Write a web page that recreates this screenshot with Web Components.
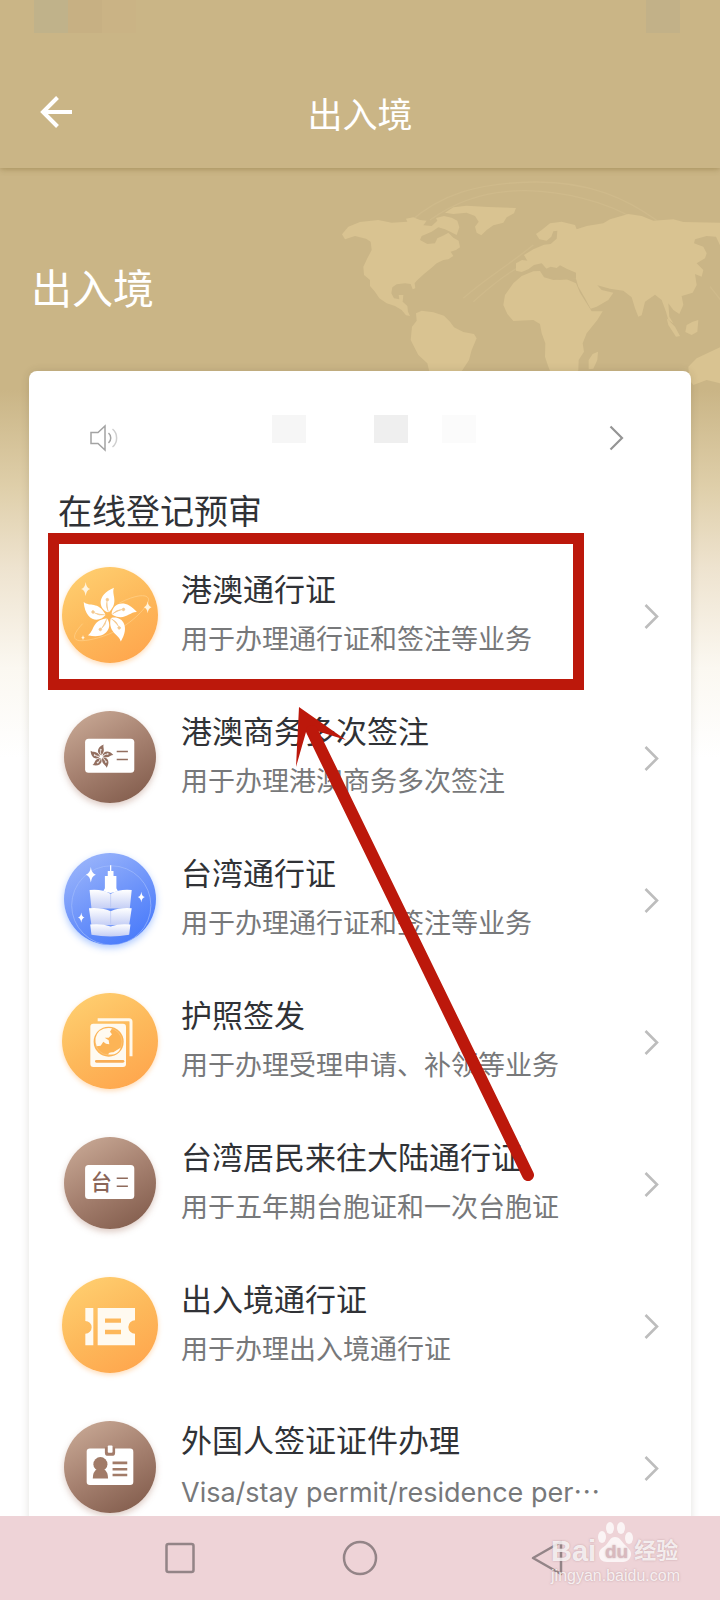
<!DOCTYPE html>
<html lang="zh-CN">
<head>
<meta charset="UTF-8">
<meta name="viewport" content="width=device-width, initial-scale=1">
<title>出入境</title>
<style>
  html, body {
    height: 100%;
    margin: 0;
  }
  body {
    font-family: Inter, "Noto Sans CJK SC", sans-serif;
    color: #303236;
    background: #fff;
  }
</style>
</head>
<body>
<app-shell>
  <app-header slot="header">出入境</app-header>
  <hero-banner>出入境</hero-banner>
  <service-card heading="在线登记预审">
    <service-item icon="flower" tone="gold" label="港澳通行证">用于办理通行证和签注等业务</service-item>
    <service-item icon="flower-card" tone="brown" label="港澳商务多次签注">用于办理港澳商务多次签注</service-item>
    <service-item icon="tower" tone="blue" label="台湾通行证">用于办理通行证和签注等业务</service-item>
    <service-item icon="passport" tone="gold" label="护照签发">用于办理受理申请、补领等业务</service-item>
    <service-item icon="tai-card" tone="brown" label="台湾居民来往大陆通行证">用于五年期台胞证和一次台胞证</service-item>
    <service-item icon="ticket" tone="gold" label="出入境通行证">用于办理出入境通行证</service-item>
    <service-item icon="badge" tone="brown" label="外国人签证证件办理">Visa/stay permit/residence per<span style="font-family: 'Noto Sans CJK SC', sans-serif">…</span></service-item>
  </service-card>
  <guide-marks></guide-marks>
  <system-nav slot="footer">
    <baidu-mark></baidu-mark>
  </system-nav>
</app-shell>

<script>
class AppShell extends HTMLElement {
  constructor() {
    super();
    this.attachShadow({ mode: 'open' });
    this.shadowRoot.innerHTML = `
      <style>
        :host {
          display: flex;
          flex-direction: column;
          height: 100vh;
        }
        main {
          position: relative;
          flex: 1;
          min-height: 0;
          overflow-y: auto;
          scrollbar-width: none;
          background: linear-gradient(#cab586 0, #cab586 222px, #dfcfaa 320px, #eee3cf 400px, #fbf8f1 500px, #fff 590px);
        }
      </style>
      <slot name="header"></slot>
      <main><slot></slot></main>
      <slot name="footer"></slot>
    `;
  }
}
customElements.define('app-shell', AppShell);

class AppHeader extends HTMLElement {
  constructor() {
    super();
    this.attachShadow({ mode: 'open' });
    this.shadowRoot.innerHTML = `
      <style>
        :host {
          display: block;
          position: relative;
          z-index: 1;
          background: #cab586;
          box-shadow: 0 1px 6px rgba(120, 95, 40, 0.45);
        }
        .status {
          display: flex;
          height: 56px;
          padding: 0 40px 0 34px;
        }
        .status i {
          width: 34px;
          height: 33px;
          background: #c0b28a;
        }
        .status i:nth-child(2) { background: #c7b083; }
        .status i:nth-child(3) { background: #cab385; }
        .status i:last-child { margin-left: auto; background: #c2b188; }
        .bar {
          display: grid;
          grid-template-columns: 72px 1fr 72px;
          align-items: center;
          height: 112px;
        }
        button {
          display: flex;
          justify-content: flex-end;
          padding: 0;
          border: 0;
          background: none;
        }
        h1 {
          margin: 0;
          padding-top: 6px;
          font-size: 35px;
          line-height: 52px;
          font-weight: 400;
          text-align: center;
          color: #fff;
        }
      </style>
      <div class="status"><i></i><i></i><i></i><i></i></div>
      <div class="bar">
        <button type="button" aria-label="返回">
          <svg width="32" height="32" viewBox="0 0 32 32" fill="none" stroke="#fff" stroke-width="4">
            <path d="M32 16H3M17.500 1.500L3 16l14.500 14.500"/>
          </svg>
        </button>
        <h1><slot></slot></h1>
      </div>
    `;
  }
}
customElements.define('app-header', AppHeader);

class HeroBanner extends HTMLElement {
  constructor() {
    super();
    this.attachShadow({ mode: 'open' });
    this.shadowRoot.innerHTML = `
      <style>
        :host {
          display: block;
          position: relative;
          padding: 91px 31px 52px;
        }
        h2 {
          position: relative;
          margin: 0;
          font-size: 41px;
          line-height: 60px;
          font-weight: 400;
          color: #fff;
        }
        .map {
          position: absolute;
          top: 0;
          right: 0;
        }
      </style>
      <svg class="map" width="400" height="242" viewBox="0 -6 1200 726" fill="#d9c391" aria-hidden="true">
        <g fill="none" stroke="#cfba8b" stroke-width="4">
          <path d="M270 155C360 75 470 38 640 36s280 50 370 115"/>
          <path d="M330 150C420 85 520 60 620 62s240 30 330 90"/>
          <path d="M430 385C490 330 560 290 640 225M460 395C510 350 560 310 600 290M1170 350l40 50"/>
        </g>
        <path d="M66 193L85 170 120 156 175 150 215 158 262 155 258 146 280 142 300 150 320 152 310 166 335 168 352 152 348 144 372 138 395 143 412 152 418 172 410 195 392 186 375 178 355 172 335 185 305 198 300 210 322 222 345 220 352 205 372 196 385 188 400 203 416 212 420 232 408 240 392 245 400 258 385 268 370 270 350 280 335 293 312 312 290 332 284 340 286 355 278 358 272 342 255 340 230 343 217 352 214 370 222 385 238 388 236 375 250 375 248 395 262 408 264 425 270 438 258 436 245 420 225 408 200 400 178 385 165 365 150 348 150 330 132 315 130 290 142 265 155 240 152 215 138 206 105 198 75 208Z"/>
        <path d="M375 128L400 112 440 107 505 111 588 114 582 130 560 142 550 158 520 166 500 180 484 196 470 188 465 170 476 155 465 138 440 128 400 132Z"/>
        <path d="M288 430L305 422 340 427 372 437 390 455 402 472 430 486 462 492 470 505 455 540 447 570 430 596 400 640 372 690 345 680 328 605 322 580 295 555 272 510 276 470 290 452Z"/>
        <path d="M605 318L640 304 660 303 672 322 700 330 740 328 768 340 780 368 805 408 815 424 848 424 832 450 800 490 788 520 792 545 776 570 775 600 755 640 715 650 695 615 685 590 675 560 676 520 665 490 660 462 640 450 580 453 562 432 550 405 555 375 580 340Z"/>
        <path d="M588 302L588 280 606 270 622 272 612 255 640 238 672 224 692 222 710 206 712 182 700 184 694 200 680 212 658 208 648 192 665 180 690 160 725 155 765 165 770 178 800 168 850 160 870 148 925 132 965 138 1000 152 1060 148 1090 156 1200 158 1200 226 1188 200 1160 198 1125 208 1122 220 1150 230 1160 250 1155 265 1130 280 1150 300 1145 320 1125 312 1130 345 1118 368 1085 378 1090 405 1078 432 1060 420 1045 400 1048 440 1060 460 1045 450 1038 425 1025 390 1005 374 975 395 965 436 955 440 945 415 935 382 910 362 870 356 832 346 845 360 880 368 865 390 830 410 812 416 795 385 775 350 768 326 740 322 715 325 690 318 678 295 665 280 642 285 625 298 605 306Z"/>
        <path d="M834 545L832 570 820 596 806 598 806 570 818 552ZM1040 445L1065 470 1080 498 1068 500 1045 465ZM1135 450L1132 485 1115 495 1096 486 1100 465 1118 455Z"/>
        <path d="M1105 590L1130 565 1165 548 1200 532 1200 640 1160 630 1120 645 1108 630Z"/>
        <path fill="#cab586" d="M670 300l22-10 18 4 10-8 20 10 28 12v18l-50 3-44-12Z"/>
      </svg>
      <h2><slot></slot></h2>
    `;
  }
}
customElements.define('hero-banner', HeroBanner);

class ServiceCard extends HTMLElement {
  constructor() {
    super();
    this.attachShadow({ mode: 'open' });
    const heading = this.getAttribute('heading') || '';
    this.shadowRoot.innerHTML = `
      <style>
        :host {
          display: block;
          position: relative;
          margin: 0 29px;
          padding: 38px 29px 0;
          border-radius: 8px;
          background: #fff;
          box-shadow: 0 0 8px rgba(60, 50, 30, 0.14);
        }
        .notice {
          display: flex;
          align-items: center;
          box-sizing: border-box;
          width: 100%;
          height: 58px;
          padding: 0 38px 0 32px;
          border: 0;
          background: none;
        }
        .ticker {
          display: flex;
          flex: 1;
          justify-content: center;
          gap: 34px;
          padding-bottom: 18px;
        }
        .ticker i {
          width: 34px;
          height: 28px;
          background: #f6f6f6;
        }
        .ticker i:nth-child(1) { margin-left: 20px; margin-right: 34px; }
        .ticker i:nth-child(2) { background: #efefef; }
        .ticker i:nth-child(3) { background: #fbfbfb; }
        h3 {
          margin: 22px 0 9px;
          font-size: 34px;
          line-height: 46px;
          font-weight: 400;
        }
      </style>
      <button class="notice" type="button" aria-label="通知">
        <svg width="28" height="28" viewBox="0 0 28 28" fill="none" stroke="#a3a3a3" stroke-width="1.500">
          <path d="M1 8.500h7l7-6.500v24l-7-6.500H1z"/>
          <path d="M18.500 9c3 2.500 3 7.500 0 10"/>
          <path stroke="#cfcfcf" d="M22.500 5c5.500 4.500 5.500 13.500 0 18"/>
        </svg>
        <span class="ticker"><i></i><i></i><i></i></span>
        <svg width="15" height="26" viewBox="0 0 15 26" fill="none" stroke="#959595" stroke-width="2.200">
          <path d="M1.500 1.500L13 13 1.500 24.500"/>
        </svg>
      </button>
      <h3>${heading}</h3>
      <slot></slot>
    `;
  }
}
customElements.define('service-card', ServiceCard);

// all icons are drawn on a 288 grid, one disc each
const PETALS = [0, 72, 144, 216, 288]
  .map(a => `<path transform="rotate(${a})" d="M-2 -10C-30 -20 -38 -62 16 -84C7 -64 32 -42 2 -12Z"/>`)
  .join('');
const STAMENS = [0, 72, 144, 216, 288]
  .map(a => `<g transform="rotate(${a})"><path d="M-1 -12Q-10 -28 -5 -44"/><circle cx="-4" cy="-48" r="4"/></g>`)
  .join('');
const spark = (x, y, r) =>
  `<path transform="translate(${x} ${y}) scale(${r / 20})" d="M0 -20Q2 -3 13 0Q2 3 0 20Q-2 3 -13 0Q-2 -3 0 -20Z"/>`;

const ICONS = {
  'flower': `
    <path fill="none" stroke="#ffd18c" stroke-width="2" d="M172 108C235 76 268 82 258 106S190 190 110 212 20 215 62 170"/>
    <g transform="translate(140 146)" fill="#fff">${PETALS}</g>
    <g transform="translate(140 146)" fill="#f4c88e" stroke="#f4c88e" stroke-width="2">${STAMENS}</g>
    <g fill="#fff3dc">${spark(71, 66, 21)}${spark(257, 121, 18)}${spark(63, 212, 8)}</g>`,
  'flower-card': `
    <rect x="66" y="87" width="154" height="106" rx="11" fill="#fff"/>
    <g transform="translate(117 143) scale(.45)" fill="#936f60">${PETALS}</g>
    <g transform="translate(117 143) scale(.45)" fill="#fff" stroke="#fff" stroke-width="4">${STAMENS}</g>
    <path stroke="#936f60" stroke-width="5" d="M165 127h35M165 152h35"/>`,
  'tower': `
    <defs>
      <linearGradient id="tier" x1="0" y1="0" x2="0" y2="1">
        <stop offset="0" stop-color="#fff"/><stop offset="1" stop-color="#c4cef5"/>
      </linearGradient>
      <clipPath id="disc"><circle cx="144" cy="144" r="144"/></clipPath>
    </defs>
    <circle cx="148" cy="164" r="124" fill="none" stroke="#a5befc" stroke-width="2" clip-path="url(#disc)"/>
    <path fill="#fff" d="M144 38h4v18h7v16h9v38l5 10-23 5-23-5 5-10V72h9V56h7z"/>
    <g fill="url(#tier)">
      <path d="M80 116Q118 112 146 128Q174 112 212 116L206 174H86Z"/>
      <path d="M78 173Q118 170 146 182Q174 170 212 173L204 226H86Z"/>
      <path d="M82 224Q118 220 146 230Q174 220 208 224L204 256Q146 266 86 256Z"/>
    </g>
    <path stroke="#b3c1f3" stroke-width="2" d="M146 128v42M146 182v40"/>
    <g fill="#fff">${spark(84, 68, 24)}${spark(242, 138, 17)}${spark(54, 202, 16)}</g>`,
  'passport': `
    <path fill="none" stroke="#fff8ea" stroke-width="9" d="M107 80h94q6 0 6 6v104"/>
    <rect x="85" y="92" width="107" height="130" rx="9" fill="#fffaf0"/>
    <circle cx="140" cy="146" r="45" fill="#fcb456"/>
    <circle cx="140" cy="146" r="40" fill="none" stroke="#fdc981" stroke-width="2"/>
    <path fill="#fffaf0" d="M104 160Q94 132 112 114Q128 102 150 106L144 116 150 124 140 134 128 134 140 142 142 154 132 152 124 146 116 158ZM138 184Q142 176 154 178L176 164Q168 188 138 184Z"/>
    <path stroke="#f8ad55" stroke-width="8" stroke-linecap="round" d="M103 205h80"/>`,
  'tai-card': `
    <rect x="66" y="88" width="154" height="106" rx="11" fill="#fff"/>
    <text x="84" y="165" font-size="66" font-weight="500" fill="#8a6557" font-family="Noto Sans CJK SC, sans-serif">台</text>
    <path stroke="#8f6b5c" stroke-width="5" d="M165 129h35M165 154h35"/>`,
  'ticket': `
    <path fill="#fffaf0" d="M70 93h24v112H70v-35a19 19 0 0 0 0-38zM107 93h112v37a20 20 0 0 0 0 40v35H107z"/>
    <path stroke="#fdb85c" stroke-width="13" d="M129 131h48M129 165h48"/>`,
  'badge': `
    <rect x="71" y="86" width="146" height="114" rx="10" fill="#fff"/>
    <path fill="#a37c6a" d="M128 82h32v17q0 10-10 10h-12q-10 0-10-10z"/>
    <rect x="137" y="77" width="15" height="22" rx="3" fill="#fff"/>
    <g fill="#a17b68">
      <circle cx="114" cy="135" r="22"/>
      <path d="M104 150h20q14 8 14 30H90q0-22 14-30z"/>
    </g>
    <path stroke="#a17b68" stroke-width="8" d="M152 131h46M152 151h46M152 169h46"/>`
};

class ServiceItem extends HTMLElement {
  constructor() {
    super();
    this.attachShadow({ mode: 'open' });
    const icon = this.getAttribute('icon');
    const tone = this.getAttribute('tone');
    const label = this.getAttribute('label');
    this.shadowRoot.innerHTML = `
      <style>
        :host { display: block; }
        a {
          display: grid;
          grid-template-columns: 96px minmax(0, 1fr) 15px;
          column-gap: 23px;
          align-items: center;
          height: 142px;
          padding: 0 3px 0 4px;
          color: inherit;
          text-decoration: none;
        }
        .disc {
          justify-self: center;
          width: 92px;
          height: 92px;
          border-radius: 50%;
        }
        .disc svg { display: block; width: 100%; height: 100%; }
        .gold {
          width: 96px;
          height: 96px;
          background: linear-gradient(150deg, #ffd273, #fdb95b 50%, #ffa24a);
          box-shadow: 0 2px 5px rgba(255, 170, 80, 0.4);
        }
        .brown {
          background: linear-gradient(150deg, #cdae9a, #a5806f 50%, #7d5747);
          box-shadow: 0 3px 6px rgba(160, 110, 90, 0.35);
        }
        .blue {
          background: linear-gradient(150deg, #a3bbfb, #6f95fa 50%, #3f74fb);
          box-shadow: 0 3px 7px rgba(80, 140, 255, 0.45);
        }
        .label, .desc {
          display: block;
          line-height: 50px;
          white-space: nowrap;
        }
        .label { font-size: 31px; }
        .desc {
          overflow: hidden;
          font-size: 27px;
          color: #77787a;
        }
      </style>
      <a href="#${icon}">
        <span class="disc ${tone}">
          <svg viewBox="0 0 288 288" aria-hidden="true">${ICONS[icon]}</svg>
        </span>
        <span class="text">
          <span class="label">${label}</span>
          <span class="desc"><slot></slot></span>
        </span>
        <svg width="15" height="28" viewBox="0 0 15 28" fill="none" stroke="#bdbdbd" stroke-width="2.600" aria-hidden="true">
          <path d="M1.500 4L13 15.500 1.500 27"/>
        </svg>
      </a>
    `;
  }
}
customElements.define('service-item', ServiceItem);

// red frame and arrow that lie over the list
class GuideMarks extends HTMLElement {
  constructor() {
    super();
    this.attachShadow({ mode: 'open' });
    this.shadowRoot.innerHTML = `
      <style>
        :host {
          position: absolute;
          top: 365px;
          left: 48px;
          pointer-events: none;
        }
        svg { display: block; }
      </style>
      <svg width="536" height="660" viewBox="48 533 536 660" aria-hidden="true">
        <rect x="53.500" y="538.500" width="525" height="146" fill="none" stroke="#bc180b" stroke-width="11"/>
        <path fill="#bc180b" d="M299 707l47 33-29-9-11 1-10 35z"/>
        <path stroke="#bc180b" stroke-width="12" stroke-linecap="round" d="M528 1175L312 731"/>
      </svg>
    `;
  }
}
customElements.define('guide-marks', GuideMarks);

class SystemNav extends HTMLElement {
  constructor() {
    super();
    this.attachShadow({ mode: 'open' });
    this.shadowRoot.innerHTML = `
      <style>
        :host {
          display: block;
          position: relative;
          background: #eed3d7;
        }
        nav {
          display: grid;
          grid-template-columns: repeat(3, 1fr);
          width: 75%;
          height: 84px;
          margin: 0 auto;
        }
        button {
          display: flex;
          align-items: center;
          justify-content: center;
          padding: 0;
          border: 0;
          background: none;
        }
      </style>
      <nav>
        <button type="button" aria-label="最近任务">
          <svg width="36" height="36" viewBox="0 0 36 36" fill="none" stroke="#938487" stroke-width="2.500"><rect x="4.500" y="4" width="27" height="28" rx="2"/></svg>
        </button>
        <button type="button" aria-label="主页">
          <svg width="36" height="36" viewBox="0 0 36 36" fill="none" stroke="#938487" stroke-width="2.500"><circle cx="18" cy="18" r="16"/></svg>
        </button>
        <button type="button" aria-label="返回上一页">
          <svg width="52" height="36" viewBox="0 0 52 36" fill="none" stroke="#938487" stroke-width="2.500" stroke-linejoin="round"><path d="M19 18L47 2v32z"/></svg>
        </button>
      </nav>
      <slot></slot>
    `;
  }
}
customElements.define('system-nav', SystemNav);

class BaiduMark extends HTMLElement {
  constructor() {
    super();
    this.attachShadow({ mode: 'open' });
    this.shadowRoot.innerHTML = `
      <style>
        :host {
          position: absolute;
          right: 40px;
          bottom: 14px;
          color: rgba(255, 255, 255, 0.8);
          font-family: "Liberation Sans", "Noto Sans CJK SC", sans-serif;
          text-shadow: 0 0 2px rgba(150, 110, 115, 0.5);
          pointer-events: none;
        }
        .brand {
          display: flex;
          align-items: flex-end;
          font-size: 29px;
          line-height: 30px;
          font-weight: 700;
        }
        .brand svg { display: block; margin: 0 1px 3px; }
        .cn { font-size: 22px; }
        .url {
          font-size: 16px;
          line-height: 20px;
        }
      </style>
      <div class="brand">
        <span>Bai</span>
        <svg width="36" height="42" viewBox="0 0 36 42" fill="#fff" fill-opacity=".75" aria-hidden="true">
          <ellipse cx="5" cy="16" rx="4" ry="6"/>
          <ellipse cx="13" cy="7" rx="4" ry="6"/>
          <ellipse cx="24" cy="7" rx="4" ry="6"/>
          <ellipse cx="32" cy="17" rx="4" ry="6"/>
          <path d="M18 16c5 0 7 5 10 8s6 5 6 9-3 8-8 8H10c-5 0-8-3-8-8s4-6 7-9 4-8 9-8z"/>
          <text x="8" y="37" font-size="19" font-weight="700" fill="#d9b9be" fill-opacity="1">du</text>
        </svg>
        <span class="cn">经验</span>
      </div>
      <div class="url">jingyan.baidu.com</div>
    `;
  }
}
customElements.define('baidu-mark', BaiduMark);
</script>
</body>
</html>
